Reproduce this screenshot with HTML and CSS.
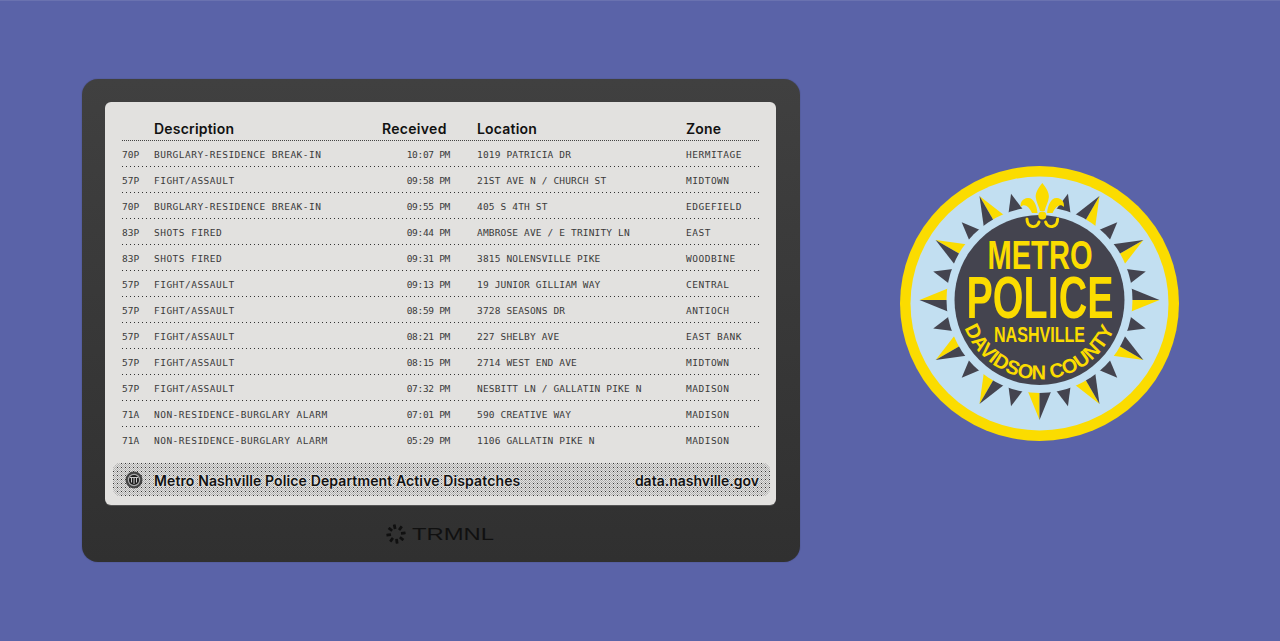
FILE: index.html
```html
<!DOCTYPE html>
<html lang="en">
<head>
<meta charset="utf-8">
<title>Metro Nashville Police Department Active Dispatches</title>
<link rel="stylesheet" href="styles.css">
</head>
<body>
<main class="stage">
  <section class="device">
    <div class="screen">
      <div class="table">
        <div class="row head"><span></span><span>Description</span><span class="received">Received</span><span class="loc">Location</span><span>Zone</span></div>
        <div class="row"><span>70P</span><span class="desc">BURGLARY-RESIDENCE BREAK-IN</span><span class="time">10:07 PM</span><span class="loc">1019 PATRICIA DR</span><span class="zone">HERMITAGE</span></div>
        <div class="row"><span>57P</span><span class="desc">FIGHT/ASSAULT</span><span class="time">09:58 PM</span><span class="loc">21ST AVE N / CHURCH ST</span><span class="zone">MIDTOWN</span></div>
        <div class="row"><span>70P</span><span class="desc">BURGLARY-RESIDENCE BREAK-IN</span><span class="time">09:55 PM</span><span class="loc">405 S 4TH ST</span><span class="zone">EDGEFIELD</span></div>
        <div class="row"><span>83P</span><span class="desc">SHOTS FIRED</span><span class="time">09:44 PM</span><span class="loc">AMBROSE AVE / E TRINITY LN</span><span class="zone">EAST</span></div>
        <div class="row"><span>83P</span><span class="desc">SHOTS FIRED</span><span class="time">09:31 PM</span><span class="loc">3815 NOLENSVILLE PIKE</span><span class="zone">WOODBINE</span></div>
        <div class="row"><span>57P</span><span class="desc">FIGHT/ASSAULT</span><span class="time">09:13 PM</span><span class="loc">19 JUNIOR GILLIAM WAY</span><span class="zone">CENTRAL</span></div>
        <div class="row"><span>57P</span><span class="desc">FIGHT/ASSAULT</span><span class="time">08:59 PM</span><span class="loc">3728 SEASONS DR</span><span class="zone">ANTIOCH</span></div>
        <div class="row"><span>57P</span><span class="desc">FIGHT/ASSAULT</span><span class="time">08:21 PM</span><span class="loc">227 SHELBY AVE</span><span class="zone">EAST BANK</span></div>
        <div class="row"><span>57P</span><span class="desc">FIGHT/ASSAULT</span><span class="time">08:15 PM</span><span class="loc">2714 WEST END AVE</span><span class="zone">MIDTOWN</span></div>
        <div class="row"><span>57P</span><span class="desc">FIGHT/ASSAULT</span><span class="time">07:32 PM</span><span class="loc">NESBITT LN / GALLATIN PIKE N</span><span class="zone">MADISON</span></div>
        <div class="row"><span>71A</span><span class="desc">NON-RESIDENCE-BURGLARY ALARM</span><span class="time">07:01 PM</span><span class="loc">590 CREATIVE WAY</span><span class="zone">MADISON</span></div>
        <div class="row last"><span>71A</span><span class="desc">NON-RESIDENCE-BURGLARY ALARM</span><span class="time">05:29 PM</span><span class="loc">1106 GALLATIN PIKE N</span><span class="zone">MADISON</span></div>
      </div>
      <footer class="title-bar">
        <svg class="mini-badge" viewBox="0 0 18 18" aria-hidden="true">
          <circle cx="9" cy="9" r="8.5" fill="#444"/>
          <circle cx="9" cy="9" r="6.2" fill="#aaa"/>
          <circle cx="9" cy="9" r="5" fill="#1c1c1c"/>
          <path d="M5 6.5h8M6.5 6.5v5M9 6v7M11.5 6.5v5" stroke="#ccc" stroke-width="1" fill="none"/>
        </svg>
        <span class="title-text">Metro Nashville Police Department Active Dispatches</span>
        <span class="title-source">data.nashville.gov</span>
      </footer>
    </div>
    <div class="brand">
      <svg class="brand-mark" viewBox="0 0 20 20" aria-hidden="true">
        <g fill="#101010">
          <rect x="8.8" y="0.4" width="2.8" height="4.6" rx="0.4" transform="rotate(-12 10 10)"/>
          <rect x="8.8" y="0.4" width="2.8" height="4.6" rx="0.4" transform="rotate(36 10 10)"/>
          <rect x="8.8" y="0.4" width="2.8" height="4.6" rx="0.4" transform="rotate(82 10 10)"/>
          <rect x="8.8" y="0.4" width="2.8" height="4.6" rx="0.4" transform="rotate(128 10 10)"/>
          <rect x="8.8" y="0.4" width="2.8" height="4.6" rx="0.4" transform="rotate(172 10 10)"/>
          <rect x="8.8" y="0.4" width="2.8" height="4.6" rx="0.4" transform="rotate(216 10 10)"/>
          <rect x="8.8" y="0.4" width="2.8" height="4.6" rx="0.4" transform="rotate(262 10 10)"/>
          <rect x="8.8" y="0.4" width="2.8" height="4.6" rx="0.4" transform="rotate(308 10 10)"/>
        </g>
      </svg>
      <svg class="brand-word" viewBox="0 0 82 14" role="img" aria-label="TRMNL">
        <text x="0" y="12.5" class="brand-text" textLength="82" lengthAdjust="spacingAndGlyphs">TRMNL</text>
      </svg>
    </div>
  </section>
  <svg class="seal" viewBox="0 0 280 276" role="img" aria-label="Metro Police Nashville Davidson County">
    <defs>
      <path id="seal-arc" d="M 64.5 162 A 80.5 80.5 0 0 0 211.5 169"/>
      <g id="big-ray">
        <path d="M0 -88 L0 -120 L13 -88 Z" fill="#fbdc00"/>
        <path d="M0 -88 L0 -120 L-13 -88 Z" fill="#44444f"/>
      </g>
      <path id="small-ray" d="M-9 -88 L0 -110 L9 -88 Z" fill="#44444f"/>
    </defs>
    <ellipse cx="139.5" cy="137.5" rx="139.5" ry="137.5" fill="#fbdc00"/>
    <ellipse cx="139.5" cy="137.5" rx="129" ry="127" fill="#c2dff1"/>
    <g transform="translate(139.5 134)">
      <use href="#big-ray" transform="rotate(30)"/>
      <use href="#big-ray" transform="rotate(60)"/>
      <use href="#big-ray" transform="rotate(90)"/>
      <use href="#big-ray" transform="rotate(120)"/>
      <use href="#big-ray" transform="rotate(150)"/>
      <use href="#big-ray" transform="rotate(180)"/>
      <use href="#big-ray" transform="rotate(210)"/>
      <use href="#big-ray" transform="rotate(240)"/>
      <use href="#big-ray" transform="rotate(270)"/>
      <use href="#big-ray" transform="rotate(300)"/>
      <use href="#big-ray" transform="rotate(330)"/>
      <use href="#small-ray" transform="rotate(15)"/>
      <use href="#small-ray" transform="rotate(45)"/>
      <use href="#small-ray" transform="rotate(75)"/>
      <use href="#small-ray" transform="rotate(105)"/>
      <use href="#small-ray" transform="rotate(135)"/>
      <use href="#small-ray" transform="rotate(165)"/>
      <use href="#small-ray" transform="rotate(195)"/>
      <use href="#small-ray" transform="rotate(225)"/>
      <use href="#small-ray" transform="rotate(255)"/>
      <use href="#small-ray" transform="rotate(285)"/>
      <use href="#small-ray" transform="rotate(315)"/>
      <use href="#small-ray" transform="rotate(345)"/>
      <circle r="93" fill="#c2dff1"/>
      <circle r="85" fill="#44444f"/>
    </g>
    <path class="fleur" d="M142.3 17 C138.5 22 135.5 26 135.7 31 C136 36 139 40 140 45 L144.6 45 C145.6 40 148.6 36 148.9 31 C149.1 26 146.1 22 142.3 17 Z"/>
    <path class="fleur" d="M137.5 47 C137 39 133 31 127.5 32 C123 32.5 120 36 120.7 41 C124 37 129 40 132 47 Z"/>
    <path class="fleur" d="M147.1 47 C147.6 39 151.6 31 157.1 32 C161.6 32.5 164.6 36 163.9 41 C160.6 37 155.6 40 152.6 47 Z"/>
    <circle class="fleur" cx="142.3" cy="49.5" r="4"/>
    <path class="fleur-curl" d="M127 53 C127 62 137 63 139 56"/>
    <path class="fleur-curl" d="M157.6 53 C157.6 62 147.6 63 145.6 56"/>
    <text class="seal-text" x="87.5" y="102.5" font-size="40" textLength="105" lengthAdjust="spacingAndGlyphs">METRO</text>
    <text class="seal-text" x="66.5" y="152" font-size="60" textLength="147" lengthAdjust="spacingAndGlyphs">POLICE</text>
    <text class="seal-text" x="94" y="175.5" font-size="22" textLength="91" lengthAdjust="spacingAndGlyphs">NASHVILLE</text>
    <text class="seal-text seal-arc-text" font-size="20"><textPath href="#seal-arc">DAVIDSON COUNTY</textPath></text>
  </svg>
</main>
</body>
</html>
```
FILE: styles.css
```css
* { box-sizing: border-box; }
html, body { margin: 0; height: 100%; }
body { background: #5a63a8; overflow: hidden; }
.stage {
  height: 641px;
  display: flex;
  align-items: flex-start;
  padding: 79px 0 0 82px;
  border-top: 1px solid #6a72b0;
}
.device {
  width: 718px;
  height: 483px;
  margin-top: -1px;
  padding: 23px 24px 0 23px;
  border-radius: 16px;
  background: linear-gradient(#404040, #303030);
  box-shadow: 0 0 1px 0 rgba(30, 30, 50, 0.7);
  display: flex;
  flex-direction: column;
}
.screen {
  width: 671px;
  height: 403px;
  padding: 16px 6px 0 8px;
  border-radius: 6px;
  background: #e2e1df;
  box-shadow: 0 1px 0 #555;
  display: flex;
  flex-direction: column;
}
.table { padding: 0 9px; width: 655px; }
.row {
  display: grid;
  grid-template-columns: 32px 228px 68px 236px 73px;
  height: 26px;
  align-items: center;
  font: 9.5px/12px "DejaVu Sans Mono", "Liberation Mono", monospace;
  color: #3a3a3a;
  padding-top: 1px;
  background: repeating-linear-gradient(90deg, #333 0 1px, transparent 1px 4px) left bottom / 100% 1px no-repeat;
}
.row span { white-space: nowrap; }
.row .loc { padding-left: 27px; letter-spacing: 0.16px; }
.row .desc { letter-spacing: 0.48px; }
.row .zone { letter-spacing: 0.5px; }
.row .time { text-align: right; letter-spacing: -0.3px; }
.row.head {
  height: 23px;
  padding: 0 0 2px;
  font: 600 14px/18px Inter, "Liberation Sans", sans-serif;
  color: #111;
  background: repeating-linear-gradient(90deg, #444 0 1px, transparent 1px 2px) left bottom / 100% 1px no-repeat;
}
.row.head span { letter-spacing: 0.2px; }
.row.head .received { margin-right: -6px; letter-spacing: 0.3px; }
.row.last { background: none; }
.title-bar {
  margin: 10px 0 0 0;
  height: 33px;
  width: 657px;
  padding: 3px 11px 0 12px;
  display: flex;
  align-items: center;
  border-radius: 8px;
  background-color: #e2e1df;
  background-image:
    radial-gradient(circle at 0.5px 0.5px, #333 0.5px, transparent 0.6px),
    conic-gradient(#e2e1df 25%, #b0b0b0 0 50%, #e2e1df 0 75%, #b0b0b0 0);
  background-size: 4px 4px, 2px 2px;
}
.mini-badge { width: 18px; height: 18px; flex: none; margin-top: -3px; }
.title-text, .title-source {
  font: 600 14px/18px Inter, "Liberation Sans", sans-serif;
  color: #111;
  text-shadow: 0 0 2px #e2e1df, 0 0 2px #e2e1df, 0 0 3px #e2e1df, 0 0 3px #e2e1df;
  white-space: nowrap;
}
.title-text { margin-left: 11px; letter-spacing: 0.12px; }
.title-source { margin-left: auto; }
.brand {
  display: flex;
  align-items: center;
  justify-content: center;
  gap: 6px;
  height: 57px;
  padding-right: 1px;
}
.brand-mark { width: 20px; height: 20px; flex: none; }
.brand-word { width: 82px; height: 14px; flex: none; }
.brand-text { font: 400 16px "Liberation Sans", sans-serif; fill: #101010; }
.seal { width: 280px; height: 276px; flex: none; margin: 86px 0 0 100px; }
.seal-text { font-family: "Liberation Sans", sans-serif; font-weight: 700; fill: #fbdc00; }
.seal-arc-text { letter-spacing: -0.15px; }
.fleur { fill: #fbdc00; }
.fleur-curl { fill: none; stroke: #fbdc00; stroke-width: 3; stroke-linecap: round; }
```
